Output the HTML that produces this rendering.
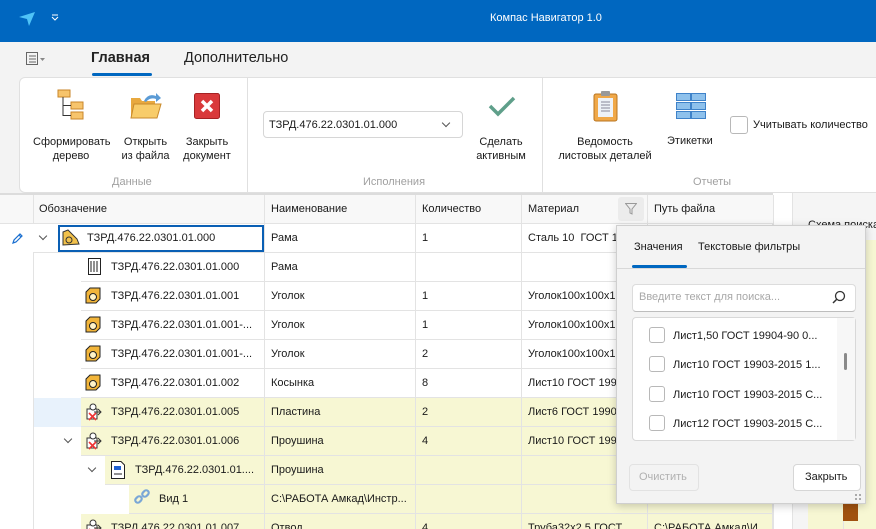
<!DOCTYPE html>
<html><head><meta charset="utf-8"><style>
*{box-sizing:border-box;margin:0;padding:0}
html,body{width:876px;height:529px;overflow:hidden}
body{position:relative;background:#f3f3f3;font-family:"Liberation Sans","DejaVu Sans",sans-serif;font-size:11px;color:#1a1a1a}
.a{position:absolute}
.t{position:absolute;white-space:nowrap}
.row{position:absolute;left:0;height:29px;width:773px}
.cell{position:absolute;top:0;height:29px;border-bottom:1px solid #e3e3e3;border-right:1px solid #e3e3e3;line-height:28px;padding-left:6px;white-space:nowrap;overflow:hidden}
.y{background:#f7f7d3}
.w{background:#fff}
.chev{position:absolute;width:6px;height:6px;border-right:1.3px solid #555;border-bottom:1.3px solid #555;transform:rotate(45deg)}
.lbl{color:#a0a0a0;font-size:11px}
.cb{position:absolute;width:16px;height:16px;border:1px solid #b8b8b8;border-radius:3px;background:#fff}
</style></head><body>
<div class="a" style="left:0;top:0;width:876px;height:42px;background:#0067c0"></div>
<svg class="a" style="left:18px;top:11px" width="18" height="16" viewBox="0 0 18 16"><path d="M1 6 L17 1 L11 15 L9 8 Z" fill="#4fc3f7"/></svg>
<svg class="a" style="left:51px;top:14px" width="8" height="8"><path d="M1 1h6M1 3l3 3 3-3" stroke="#fff" fill="none"/></svg>
<div class="t" style="left:490px;top:12px;color:#fff;font-size:11px">Компас Навигатор 1.0</div>
<svg class="a" style="left:26px;top:52px" width="20" height="14"><rect x="0.5" y="0.5" width="11" height="12" fill="none" stroke="#666"/><line x1="3" y1="4" x2="10" y2="4" stroke="#666"/><line x1="3" y1="7" x2="10" y2="7" stroke="#666"/><line x1="3" y1="10" x2="10" y2="10" stroke="#666"/><path d="M14 6 L19 6 L16.5 9Z" fill="#888"/></svg>
<div class="t" style="left:91px;top:50px;font-size:14.5px;font-weight:bold;color:#222">Главная</div>
<div class="a" style="left:92px;top:73px;width:60px;height:3px;background:#0067c0;border-radius:2px"></div>
<div class="t" style="left:184px;top:50px;font-size:14.5px;color:#222">Дополнительно</div>
<div class="a" style="left:19px;top:77px;width:870px;height:116px;background:#fff;border:1px solid #e0e0e0;border-radius:6px 0 0 6px"></div>
<div class="a" style="left:247px;top:78px;width:1px;height:114px;background:#e0e0e0"></div>
<div class="a" style="left:542px;top:78px;width:1px;height:114px;background:#e0e0e0"></div>
<svg class="a" style="left:57px;top:89px" width="28" height="32"><rect x="1" y="1" width="12" height="7" fill="#f7c46c" stroke="#c8862a"/><rect x="14" y="13" width="12" height="7" fill="#f7c46c" stroke="#c8862a"/><rect x="14" y="23" width="12" height="7" fill="#f7c46c" stroke="#c8862a"/><path d="M6 8 V26.5 H14 M6 16.5 H14" fill="none" stroke="#333"/></svg>
<svg class="a" style="left:130px;top:92px" width="32" height="28"><path d="M1 6 h9 l2 3 h13 v17 H1Z" fill="#e8a940"/><path d="M4 12 h27 l-4 14 H1Z" fill="#f8cc6a" stroke="#c98a2c"/><path d="M14 9 q4 -8 12 -5 l0 -3 l5 5 l-5 4 v-3 q-6 -2 -10 3" fill="#5b9bd5"/></svg>
<svg class="a" style="left:194px;top:93px" width="26" height="26"><rect x="0.5" y="0.5" width="25" height="25" rx="2" fill="#d9393b" stroke="#a52224"/><path d="M8 8 L18 18 M18 8 L8 18" stroke="#fff" stroke-width="3.5"/></svg>
<div class="t" style="left:33px;top:135px;text-align:center;width:76px;line-height:14px">Сформировать<br>дерево</div>
<div class="t" style="left:120px;top:135px;text-align:center;width:51px;line-height:14px">Открыть<br>из файла</div>
<div class="t" style="left:180px;top:135px;text-align:center;width:54px;line-height:14px">Закрыть<br>документ</div>
<div class="t lbl" style="left:112px;top:176px">Данные</div>
<div class="a" style="left:263px;top:111px;width:200px;height:27px;border:1px solid #d6d6d6;border-radius:4px;background:#fff"></div>
<div class="t" style="left:269px;top:119px">ТЗРД.476.22.0301.01.000</div>
<div class="chev" style="left:443px;top:120px"></div>
<svg class="a" style="left:488px;top:95px" width="28" height="22"><path d="M2 11 L10 19 L26 3" fill="none" stroke="#5f9f8a" stroke-width="3.5"/></svg>
<div class="t" style="left:474px;top:135px;text-align:center;width:54px;line-height:14px">Сделать<br>активным</div>
<div class="t lbl" style="left:363px;top:176px">Исполнения</div>
<svg class="a" style="left:593px;top:90px" width="26" height="32"><rect x="1" y="4" width="23" height="27" rx="2" fill="#f0a848" stroke="#b87520"/><rect x="5" y="8" width="15" height="19" fill="#eef2f7"/><rect x="8" y="1" width="9" height="5" rx="1" fill="#999"/><path d="M8 12h9M8 15h9M8 18h9M8 21h9" stroke="#889"/></svg>
<div class="t" style="left:556px;top:135px;text-align:center;width:98px;line-height:14px">Ведомость<br>листовых деталей</div>
<svg class="a" style="left:676px;top:93px" width="30" height="27"><g fill="#8ec1ec" stroke="#3e82c9"><rect x="0.5" y="0.5" width="14" height="7"/><rect x="15.5" y="0.5" width="14" height="7"/><rect x="0.5" y="9.5" width="14" height="7"/><rect x="15.5" y="9.5" width="14" height="7"/><rect x="0.5" y="18.5" width="14" height="7"/><rect x="15.5" y="18.5" width="14" height="7"/></g></svg>
<div class="t" style="left:667px;top:135px">Этикетки</div>
<div class="cb" style="left:730px;top:116px;width:18px;height:18px"></div>
<div class="t" style="left:753px;top:119px">Учитывать количество</div>
<div class="t lbl" style="left:693px;top:176px">Отчеты</div>
<div class="a" style="left:0;top:193px;width:876px;height:336px;background:#fff"></div>
<div class="a" style="left:0;top:193px;width:773px;height:31px;background:#f8f8f8;border-top:2px solid #dcdcdc;border-bottom:1px solid #e3e3e3"></div>
<div class="a" style="left:33px;top:195px;width:1px;height:334px;background:#e3e3e3"></div>
<div class="t" style="left:39px;top:203px">Обозначение</div>
<div class="a" style="left:264px;top:195px;width:1px;height:29px;background:#e3e3e3"></div>
<div class="t" style="left:271px;top:203px">Наименование</div>
<div class="a" style="left:415px;top:195px;width:1px;height:29px;background:#e3e3e3"></div>
<div class="t" style="left:422px;top:203px">Количество</div>
<div class="a" style="left:521px;top:195px;width:1px;height:29px;background:#e3e3e3"></div>
<div class="t" style="left:528px;top:203px">Материал</div>
<div class="a" style="left:618px;top:197px;width:26px;height:24px;background:#ececec;border-radius:3px"></div>
<svg class="a" style="left:625px;top:203px" width="12" height="12"><path d="M0.5 0.5 H11.5 L7 6 V11 L5 10 V6Z" fill="none" stroke="#999"/></svg>
<div class="a" style="left:647px;top:195px;width:1px;height:29px;background:#e3e3e3"></div>
<div class="t" style="left:654px;top:203px">Путь файла</div>
<div class="a" style="left:773px;top:195px;width:1px;height:334px;background:#e3e3e3"></div>
<div class="a" style="left:792px;top:193px;width:84px;height:336px;background:#f5f5f5;border-left:1px solid #e3e3e3"></div>
<div class="t" style="left:808px;top:219px">Схема поиска</div>
<div class="a" style="left:808px;top:240px;width:68px;height:289px;background:#f7f7d3"></div>
<div class="a" style="left:843px;top:240px;width:1px;height:289px;background:#e3e3e3"></div>
<div class="a" style="left:843px;top:503px;width:15px;height:18px;background:#a0520f"></div>

<div class="row" style="top:224px">
 <div class="cell w" style="left:33px;width:232px"></div>
 <div class="cell w" style="left:265px;width:151px">Рама</div>
 <div class="cell w" style="left:416px;width:106px">1</div>
 <div class="cell w" style="left:522px;width:126px">Сталь 10&nbsp; ГОСТ 1</div>
 <div class="cell w" style="left:648px;width:125px"></div>
</div>
<div class="a" style="left:58px;top:225px;width:206px;height:27px;border:2px solid #0a5fb4"></div>
<svg class="a" style="left:11px;top:232px" width="13" height="13"><path d="M2 11 L3 8 L9 2 L11 4 L5 10Z M8 3 L10 5" fill="none" stroke="#1a6fd0" stroke-width="1.2"/></svg>
<div class="chev" style="left:40px;top:233px"></div>
<svg class="a" style="left:62px;top:229px" width="18" height="18"><path d="M1 3 L6 1 L15 10 L17 15 L1 16Z" fill="#f2c14a" stroke="#333"/><circle cx="7" cy="11" r="3" fill="none" stroke="#333"/></svg>
<div class="t" style="left:87px;top:232px;font-size:11px">ТЗРД.476.22.0301.01.000</div>

<div class="row" style="top:253px">
 <div class="cell w" style="left:81px;width:184px;padding-left:30px">ТЗРД.476.22.0301.01.000</div>
 <div class="cell w" style="left:265px;width:151px">Рама</div>
 <div class="cell w" style="left:416px;width:106px"></div>
 <div class="cell w" style="left:522px;width:126px"></div>
 <div class="cell w" style="left:648px;width:125px"></div>
</div>
<svg class="a" style="left:88px;top:258px" width="14" height="18"><rect x="0.5" y="0.5" width="12" height="16" fill="#fff" stroke="#222"/><path d="M3 3v11M6 3v11M9 3v11" stroke="#222"/></svg>
<div class="row" style="top:282px">
 <div class="cell w" style="left:81px;width:184px;padding-left:30px">ТЗРД.476.22.0301.01.001</div>
 <div class="cell w" style="left:265px;width:151px">Уголок</div>
 <div class="cell w" style="left:416px;width:106px">1</div>
 <div class="cell w" style="left:522px;width:126px">Уголок100x100x1</div>
 <div class="cell w" style="left:648px;width:125px"></div>
</div>
<div class="row" style="top:311px">
 <div class="cell w" style="left:81px;width:184px;padding-left:30px">ТЗРД.476.22.0301.01.001-...</div>
 <div class="cell w" style="left:265px;width:151px">Уголок</div>
 <div class="cell w" style="left:416px;width:106px">1</div>
 <div class="cell w" style="left:522px;width:126px">Уголок100x100x1</div>
 <div class="cell w" style="left:648px;width:125px"></div>
</div>
<div class="row" style="top:340px">
 <div class="cell w" style="left:81px;width:184px;padding-left:30px">ТЗРД.476.22.0301.01.001-...</div>
 <div class="cell w" style="left:265px;width:151px">Уголок</div>
 <div class="cell w" style="left:416px;width:106px">2</div>
 <div class="cell w" style="left:522px;width:126px">Уголок100x100x1</div>
 <div class="cell w" style="left:648px;width:125px"></div>
</div>
<div class="row" style="top:369px">
 <div class="cell w" style="left:81px;width:184px;padding-left:30px">ТЗРД.476.22.0301.01.002</div>
 <div class="cell w" style="left:265px;width:151px">Косынка</div>
 <div class="cell w" style="left:416px;width:106px">8</div>
 <div class="cell w" style="left:522px;width:126px">Лист10 ГОСТ 199</div>
 <div class="cell w" style="left:648px;width:125px"></div>
</div>
<svg class="a" style="left:85px;top:287px" width="16" height="17"><path d="M1 5 L5 1 H15 V12 L11 16 H1Z" fill="#f2b53a" stroke="#222"/><circle cx="8" cy="10" r="3.5" fill="#fff3c8" stroke="#222"/></svg>
<svg class="a" style="left:85px;top:316px" width="16" height="17"><path d="M1 5 L5 1 H15 V12 L11 16 H1Z" fill="#f2b53a" stroke="#222"/><circle cx="8" cy="10" r="3.5" fill="#fff3c8" stroke="#222"/></svg>
<svg class="a" style="left:85px;top:345px" width="16" height="17"><path d="M1 5 L5 1 H15 V12 L11 16 H1Z" fill="#f2b53a" stroke="#222"/><circle cx="8" cy="10" r="3.5" fill="#fff3c8" stroke="#222"/></svg>
<svg class="a" style="left:85px;top:374px" width="16" height="17"><path d="M1 5 L5 1 H15 V12 L11 16 H1Z" fill="#f2b53a" stroke="#222"/><circle cx="8" cy="10" r="3.5" fill="#fff3c8" stroke="#222"/></svg>

<div class="a" style="left:34px;top:398px;width:47px;height:29px;background:#e8f2fc"></div>
<div class="row" style="top:398px">
 <div class="cell y" style="left:81px;width:184px;padding-left:30px">ТЗРД.476.22.0301.01.005</div>
 <div class="cell y" style="left:265px;width:151px">Пластина</div>
 <div class="cell y" style="left:416px;width:106px">2</div>
 <div class="cell y" style="left:522px;width:126px">Лист6 ГОСТ 1990</div>
 <div class="cell y" style="left:648px;width:125px"></div>
</div>
<div class="row" style="top:427px">
 <div class="cell y" style="left:81px;width:184px;padding-left:30px">ТЗРД.476.22.0301.01.006</div>
 <div class="cell y" style="left:265px;width:151px">Проушина</div>
 <div class="cell y" style="left:416px;width:106px">4</div>
 <div class="cell y" style="left:522px;width:126px">Лист10 ГОСТ 199</div>
 <div class="cell y" style="left:648px;width:125px"></div>
</div>
<div class="chev" style="left:65px;top:436px"></div>
<svg class="a" style="left:86px;top:403px" width="16" height="18"><rect x="1" y="6" width="10" height="10" fill="#fff" stroke="#333"/><circle cx="7" cy="4" r="3" fill="#fff" stroke="#333"/><path d="M8 9h7M12 6l3 3-3 3" stroke="#333" fill="none"/><path d="M3 10l7 7M10 10l-7 7" stroke="#e33" stroke-width="1.6"/></svg>
<svg class="a" style="left:86px;top:432px" width="16" height="18"><rect x="1" y="6" width="10" height="10" fill="#fff" stroke="#333"/><circle cx="7" cy="4" r="3" fill="#fff" stroke="#333"/><path d="M8 9h7M12 6l3 3-3 3" stroke="#333" fill="none"/><path d="M3 10l7 7M10 10l-7 7" stroke="#e33" stroke-width="1.6"/></svg>
<div class="row" style="top:456px">
 <div class="cell y" style="left:105px;width:160px;padding-left:30px">ТЗРД.476.22.0301.01....</div>
 <div class="cell y" style="left:265px;width:151px">Проушина</div>
 <div class="cell y" style="left:416px;width:106px"></div>
 <div class="cell y" style="left:522px;width:126px"></div>
 <div class="cell y" style="left:648px;width:125px"></div>
</div>
<div class="chev" style="left:89px;top:465px"></div>
<svg class="a" style="left:111px;top:461px" width="14" height="18"><path d="M0.5 0.5H10L13.5 4V17.5H0.5Z" fill="#fff" stroke="#222"/><rect x="3" y="5" width="7" height="4" fill="#1e5fd0"/><path d="M3 13h8" stroke="#222"/></svg>
<div class="row" style="top:485px">
 <div class="cell y" style="left:129px;width:136px;padding-left:30px">Вид 1</div>
 <div class="cell y" style="left:265px;width:151px">C:\РАБОТА Амкад\Инстр...</div>
 <div class="cell y" style="left:416px;width:106px"></div>
 <div class="cell y" style="left:522px;width:126px"></div>
 <div class="cell y" style="left:648px;width:125px"></div>
</div>
<svg class="a" style="left:134px;top:489px" width="16" height="16"><g fill="none" stroke="#7aa7d6" stroke-width="2.2"><rect x="1" y="8" width="7" height="5" rx="2.5" transform="rotate(-45 4.5 10.5)"/><rect x="8" y="2" width="7" height="5" rx="2.5" transform="rotate(-45 11.5 4.5)"/></g></svg>
<div class="row" style="top:514px">
 <div class="cell y" style="left:81px;width:184px;padding-left:30px">ТЗРД.476.22.0301.01.007</div>
 <div class="cell y" style="left:265px;width:151px">Отвод</div>
 <div class="cell y" style="left:416px;width:106px">4</div>
 <div class="cell y" style="left:522px;width:126px">Труба32x2,5 ГОСТ</div>
 <div class="cell y" style="left:648px;width:125px">C:\РАБОТА Амкад\И</div>
</div>
<svg class="a" style="left:86px;top:519px" width="16" height="18"><rect x="1" y="6" width="10" height="10" fill="#fff" stroke="#333"/><circle cx="7" cy="4" r="3" fill="#fff" stroke="#333"/><path d="M8 9h7M12 6l3 3-3 3" stroke="#333" fill="none"/><path d="M3 10l7 7M10 10l-7 7" stroke="#e33" stroke-width="1.6"/></svg>

<div class="a" style="left:616px;top:225px;width:250px;height:279px;background:#f3f3f3;border:1px solid #cfcfcf;box-shadow:0 2px 8px rgba(0,0,0,.2)"></div>
<div class="t" style="left:634px;top:241px">Значения</div>
<div class="t" style="left:698px;top:241px">Текстовые фильтры</div>
<div class="a" style="left:632px;top:265px;width:55px;height:3px;background:#0067c0;border-radius:2px"></div>
<div class="a" style="left:617px;top:268px;width:248px;height:1px;background:#d8d8d8"></div>
<div class="a" style="left:632px;top:284px;width:224px;height:28px;background:#fff;border:1px solid #dcdcdc;border-bottom-color:#bdbdbd;border-radius:4px"></div>
<div class="t" style="left:639px;top:291px;color:#a8a8a8">Введите текст для поиска...</div>
<svg class="a" style="left:832px;top:290px" width="14" height="14"><circle cx="8" cy="6" r="4.5" fill="none" stroke="#333" stroke-width="1.3"/><path d="M5 9L1 13" stroke="#333" stroke-width="1.5"/></svg>
<div class="a" style="left:632px;top:317px;width:224px;height:124px;background:#fff;border:1px solid #d8d8d8;border-radius:4px"></div>
<div class="a" style="left:837px;top:318px;width:18px;height:122px;background:#f7f7f7"></div>
<div class="a" style="left:844px;top:353px;width:3px;height:17px;background:#8a8a8a;border-radius:2px"></div>
<div class="cb" style="left:649px;top:327px"></div><div class="t" style="left:673px;top:330px">Лист1,50 ГОСТ 19904-90 0...</div>
<div class="cb" style="left:649px;top:356px"></div><div class="t" style="left:673px;top:359px">Лист10 ГОСТ 19903-2015 1...</div>
<div class="cb" style="left:649px;top:386px"></div><div class="t" style="left:673px;top:389px">Лист10 ГОСТ 19903-2015 С...</div>
<div class="cb" style="left:649px;top:415px"></div><div class="t" style="left:673px;top:418px">Лист12 ГОСТ 19903-2015 С...</div>
<div class="a" style="left:629px;top:464px;width:70px;height:27px;border:1px solid #e2e2e2;border-radius:4px;background:#f3f3f3"></div>
<div class="t" style="left:639px;top:471px;color:#b0b0b0">Очистить</div>
<div class="a" style="left:793px;top:464px;width:68px;height:27px;border:1px solid #d6d6d6;border-radius:4px;background:#fff"></div>
<div class="t" style="left:805px;top:471px">Закрыть</div>
<svg class="a" style="left:855px;top:494px" width="6" height="6"><g fill="#aaa"><rect x="0" y="0" width="2" height="2"/><rect x="4" y="0" width="2" height="2"/><rect x="0" y="4" width="2" height="2"/><rect x="4" y="4" width="2" height="2"/></g></svg>
</body></html>
